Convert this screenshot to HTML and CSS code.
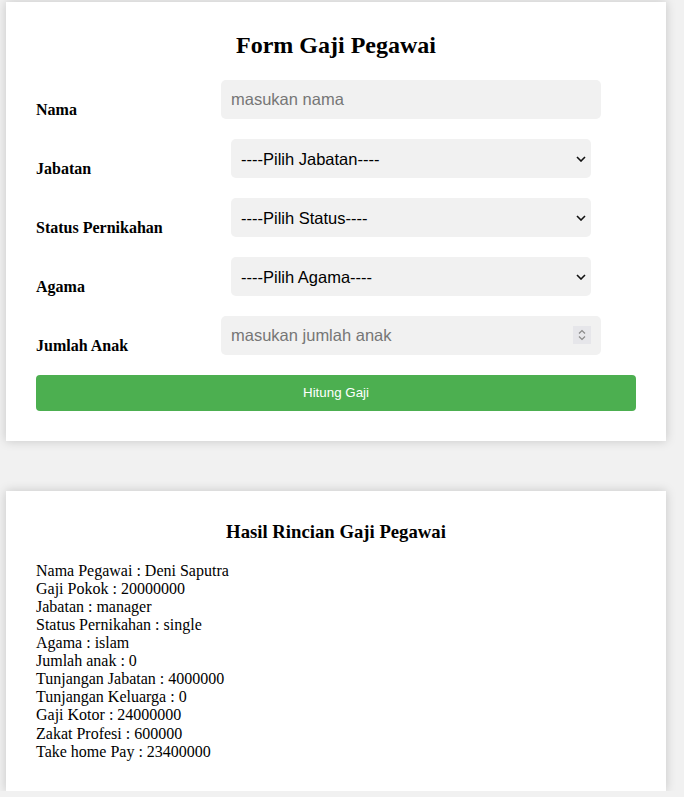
FILE: index.html
```html
<!DOCTYPE html>
<html lang="id">
<head>
<meta charset="utf-8">
<title>Form Gaji Pegawai</title>
<link rel="stylesheet" href="styles.css">
</head>
<body>
<div class="page">
  <section class="card">
    <h2 class="title">Form Gaji Pegawai</h2>
    <form class="form">
      <div class="row">
        <label class="label">Nama</label>
        <div class="field">
          <input class="input" type="text" placeholder="masukan nama">
        </div>
      </div>
      <div class="row">
        <label class="label">Jabatan</label>
        <div class="field">
          <select class="select"><option>----Pilih Jabatan----</option></select>
        </div>
      </div>
      <div class="row">
        <label class="label">Status Pernikahan</label>
        <div class="field">
          <select class="select"><option>----Pilih Status----</option></select>
        </div>
      </div>
      <div class="row">
        <label class="label">Agama</label>
        <div class="field">
          <select class="select"><option>----Pilih Agama----</option></select>
        </div>
      </div>
      <div class="row">
        <label class="label">Jumlah Anak</label>
        <div class="field">
          <input class="input" type="number" placeholder="masukan jumlah anak">
          <span class="spin" aria-hidden="true">
            <svg width="18" height="18" viewBox="0 0 18 18"><path d="M6 7.5 L9 4.5 L12 7.5" fill="none" stroke="#8a8a8a" stroke-width="1.2"/><path d="M6 10.5 L9 13.5 L12 10.5" fill="none" stroke="#8a8a8a" stroke-width="1.2"/></svg>
          </span>
        </div>
      </div>
      <button class="btn" type="button">Hitung Gaji</button>
    </form>
  </section>

  <section class="card result">
    <h3 class="subtitle">Hasil Rincian Gaji Pegawai</h3>
    <p class="lines">
      Nama Pegawai : Deni Saputra<br>
      Gaji Pokok : 20000000<br>
      Jabatan : manager<br>
      Status Pernikahan : single<br>
      Agama : islam<br>
      Jumlah anak : 0<br>
      Tunjangan Jabatan : 4000000<br>
      Tunjangan Keluarga : 0<br>
      Gaji Kotor : 24000000<br>
      Zakat Profesi : 600000<br>
      Take home Pay : 23400000
    </p>
  </section>
</div>
</body>
</html>
```

FILE: styles.css
```css
html, body {
  margin: 0;
  background: #f1f1f1;
}
body {
  font-family: "Liberation Serif", "Times New Roman", serif;
  font-size: 16px;
  color: #000;
}
.page {
  padding: 2px 6px 0;
}
.card {
  width: 660px;
  box-sizing: border-box;
  background: #fff;
  padding: 30px;
  box-shadow: 0 0 10px rgba(0, 0, 0, 0.18);
  margin-bottom: 50px;
}
.card:last-child {
  margin-bottom: 0;
}
.title {
  font-size: 24px;
  font-weight: bold;
  text-align: center;
  margin: 0 0 21px;
}
.form {
  display: flex;
  flex-direction: column;
  gap: 20px;
}
.row {
  display: flex;
  align-items: flex-end;
}
.label {
  width: 185px;
  font-weight: bold;
  font-size: 16px;
  flex: none;
}
.field {
  width: 380px;
  display: flex;
  justify-content: center;
  position: relative;
}
.input {
  width: 100%;
  box-sizing: border-box;
  height: 39px;
  padding: 10px;
  border: none;
  border-radius: 5px;
  background: #f1f1f1;
  font-family: "Liberation Sans", Arial, sans-serif;
  font-size: 16.5px;
  color: #000;
  outline: none;
}
.input::placeholder {
  color: #767676;
}
.input::-webkit-inner-spin-button,
.input::-webkit-outer-spin-button {
  -webkit-appearance: none;
  margin: 0;
}
.select {
  -webkit-appearance: none;
  appearance: none;
  width: 360px;
  box-sizing: border-box;
  height: 39px;
  padding: 0 24px 0 10px;
  border: none;
  border-radius: 5px;
  background-color: #f1f1f1;
  background-image: url("data:image/svg+xml,%3Csvg xmlns='http://www.w3.org/2000/svg' width='10' height='6' viewBox='0 0 10 6'%3E%3Cpath d='M1 1 L5 5 L9 1' fill='none' stroke='%23111' stroke-width='1.6'/%3E%3C/svg%3E");
  background-repeat: no-repeat;
  background-position: right 5px center;
  font-family: "Liberation Sans", Arial, sans-serif;
  font-size: 16.5px;
  color: #000;
}
.spin {
  position: absolute;
  right: 10px;
  top: 10px;
  width: 18px;
  height: 18px;
  background: #e6e6ea;
  display: block;
}
.spin svg {
  display: block;
}
.btn {
  height: 36px;
  width: 100%;
  border: none;
  border-radius: 4px;
  background: #4caf50;
  color: #fff;
  font-family: "Liberation Sans", Arial, sans-serif;
  font-size: 13.33px;
  padding: 0 0 2px;
}
.subtitle {
  font-size: 18.72px;
  font-weight: bold;
  text-align: center;
  margin: 0 0 18.72px;
}
.lines {
  margin: 0;
  font-size: 16px;
  line-height: 18.1px;
}
```
